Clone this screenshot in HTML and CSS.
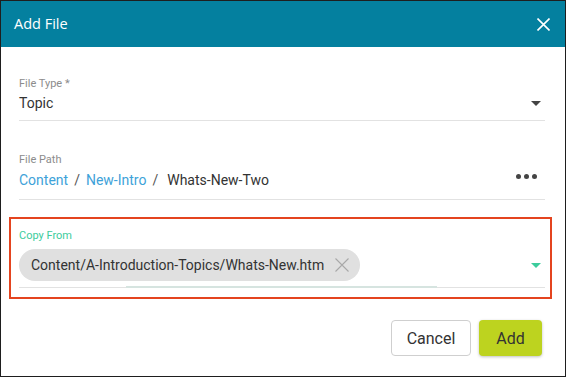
FILE: index.html
```html
<!DOCTYPE html>
<html lang="en">
<head>
    <meta charset="UTF-8">
    <meta name="viewport" content="width=device-width, initial-scale=1.0">
    <title>Add File</title>
    <link rel="stylesheet" href="styles.css">
</head>
<body>
    <div class="dialog">
        <header class="dialog-header">
            <h1>Add File</h1>
            <button class="close-btn" aria-label="Close">
                <svg width="13" height="13" viewBox="0 0 13 13">
                    <path d="M0.5 0.5 L12.5 12.5 M12.5 0.5 L0.5 12.5" stroke="#fff" stroke-width="1.6" fill="none"/>
                </svg>
            </button>
        </header>

        <div class="dialog-body">
            <div class="field">
                <label class="field-label">File Type *</label>
                <div class="field-value">
                    <span>Topic</span>
                    <span class="caret"></span>
                </div>
            </div>

            <div class="field field-path">
                <label class="field-label">File Path</label>
                <div class="field-value">
                    <div class="breadcrumb">
                        <a href="#">Content</a>
                        <span class="sep">/</span>
                        <a href="#">New-Intro</a>
                        <span class="sep">/</span>
                        <span class="current">Whats-New-Two</span>
                    </div>
                    <span class="more"><i></i><i></i><i></i></span>
                </div>
            </div>

            <div class="highlight">
                <div class="field field-focused">
                    <label class="field-label">Copy From</label>
                    <div class="field-value">
                        <span class="chip">
                            Content/A-Introduction-Topics/Whats-New.htm
                            <svg class="chip-remove" width="14" height="14" viewBox="0 0 14 14">
                                <path d="M0.5 0.5 L13.5 13.5 M13.5 0.5 L0.5 13.5" stroke="#a8a8a8" stroke-width="1.1" fill="none"/>
                            </svg>
                        </span>
                        <span class="caret caret-teal"></span>
                    </div>
                </div>
            </div>
        </div>

        <footer class="dialog-footer">
            <button class="btn btn-cancel">Cancel</button>
            <button class="btn btn-primary">Add</button>
        </footer>
    </div>
</body>
</html>
```

FILE: styles.css
```css
:root {
    --header-bg: #04809f;
    --label-color: #8c8c8c;
    --text-color: #333;
    --line-color: #e2e2e2;
    --link-color: #3ea2d9;
    --focus-color: #3ccc9c;
    --highlight: #e4441f;
    --add-bg: #bdd31f;
}

* {
    margin: 0;
    padding: 0;
    box-sizing: border-box;
}

body {
    font-family: Roboto, "Liberation Sans", sans-serif;
    color: var(--text-color);
    background: #fff;
}

.dialog {
    width: 566px;
    height: 377px;
    border: 1px solid #1e1e1e;
    background: #fff;
}

.dialog-header {
    height: 46px;
    background: var(--header-bg);
    display: flex;
    align-items: center;
    justify-content: space-between;
    padding: 0 15px 0 13px;
}

.dialog-header h1 {
    font-family: "Open Sans", sans-serif;
    font-size: 14.5px;
    font-weight: 400;
    color: #fff;
    margin-top: -2px;
}

.close-btn {
    background: none;
    border: none;
    display: flex;
    cursor: pointer;
    margin-top: 1px;
}

.dialog-body {
    padding: 30px 20px 0 18px;
}

.field {
    border-bottom: 1px solid var(--line-color);
}

.field + .field {
    margin-top: 32px;
}

.field-label {
    display: block;
    font-size: 11px;
    line-height: 14px;
    color: var(--label-color);
    margin-bottom: 2px;
}

.field-value {
    display: flex;
    align-items: center;
    justify-content: space-between;
    font-size: 14px;
    line-height: 20px;
    padding-bottom: 7px;
}

.caret {
    width: 0;
    height: 0;
    border-left: 5px solid transparent;
    border-right: 5px solid transparent;
    border-top: 5px solid #444;
    margin-right: 4px;
}

.caret-teal {
    border-top-color: var(--focus-color);
}

.field-path .field-value {
    line-height: 22px;
    padding-bottom: 8px;
}

.breadcrumb {
    display: flex;
}

.breadcrumb a {
    color: var(--link-color);
    text-decoration: none;
}

.breadcrumb .sep {
    margin: 0 6px;
    color: #555;
}

.breadcrumb .current {
    margin-left: 3px;
}

.more {
    display: flex;
    gap: 3px;
    margin-right: 8px;
    margin-top: -7px;
}

.more i {
    width: 5px;
    height: 5px;
    border-radius: 50%;
    background: #444;
}

.highlight {
    border: 2px solid var(--highlight);
    margin: 17px -7px 0 -10px;
    padding: 10px 5px 9px 8px;
}

.field-focused {
    position: relative;
}

.field-focused .field-label {
    color: var(--focus-color);
    margin-bottom: 6px;
}

.field-focused .field-value {
    padding-bottom: 6px;
}

/* focus ripple on the underline */
.field-focused::after {
    content: "";
    position: absolute;
    left: 107px;
    width: 311px;
    bottom: -1px;
    height: 2px;
    background: #d6e4e0;
}

.chip {
    display: inline-flex;
    align-items: center;
    height: 32px;
    padding: 0 11px 0 12px;
    background: #e0e0e0;
    border-radius: 16px;
    font-size: 14px;
    color: #333;
}

.chip-remove {
    margin-left: 11px;
}

.dialog-footer {
    display: flex;
    justify-content: flex-end;
    gap: 8px;
    padding: 21px 23px 0 0;
}

.btn {
    font-family: Roboto, sans-serif;
    font-size: 16px;
    height: 36px;
    border-radius: 4px;
    cursor: pointer;
    color: #333;
}

.btn-cancel {
    width: 80px;
    background: #fff;
    border: 1px solid #cfcfcf;
}

.btn-primary {
    width: 63px;
    background: var(--add-bg);
    border: none;
    box-shadow: 0 1px 3px rgba(0, 0, 0, 0.25);
}
```
